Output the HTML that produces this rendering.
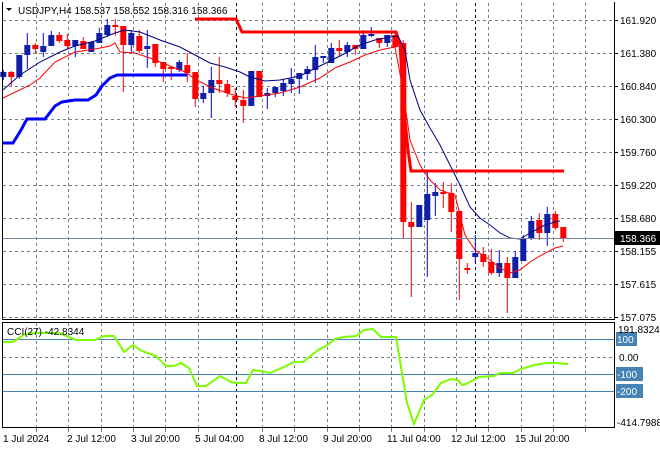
<!DOCTYPE html>
<html><head><meta charset="utf-8"><style>
html,body{margin:0;padding:0;background:#fff;width:660px;height:450px;overflow:hidden}
svg{display:block}
text{font-family:"Liberation Sans","DejaVu Sans",sans-serif;font-size:10px;fill:#000}
</style></head><body>
<svg id="s" width="660" height="450" xmlns="http://www.w3.org/2000/svg">
<rect width="660" height="450" fill="#fff"/>
<g id="grid"></g>
<g id="c"></g>
<polyline fill="none" stroke="#0000ff" stroke-width="3" points="3,143 13,143 21,130 27,119 45,119 55,106 62,102 75,100 88,100 96,95 102,86 110,78 117,75 187,75"/>
<polyline fill="none" stroke="#ff0000" stroke-width="3" points="195,19 236,19 242,32 396,32 400,44 404,110 408,150 411,171 564,171"/>
<polyline fill="none" stroke="#000080" stroke-width="1" points="3,90 20,75 40,62 60,52 75,46 95,41 115,33 125,30 140,32 160,40 180,47 195,55 210,63 225,67 240,72 250,77 265,81 280,80 300,76 320,66 340,56 360,45 375,40 390,37 398,36 405,50 410,80 420,110 430,128 440,145 450,165 460,185 470,207 480,218 490,225 500,233 510,238 520,239 530,233 545,225 555,222 560,221"/>
<polyline fill="none" stroke="#ff0000" stroke-width="1" points="3,98 30,85 40,78 55,62 75,52 95,49 110,46 115,43 120,52 135,53 150,58 170,66 185,72 195,79 210,87 230,94 245,98 260,96 280,93 300,87 320,78 335,68 350,62 365,55 380,50 395,47 403,90 410,140 420,165 430,180 440,190 455,195 465,235 475,250 490,260 500,268 510,273 520,270 530,262 540,256 555,248 563,246"/>
<line x1="3" y1="238.5" x2="614" y2="238.5" stroke="#778899" stroke-width="1"/>
<polyline fill="none" stroke="#7cfc00" stroke-width="2" points="3,342 13,342 25,334 34,333 59,333 76,340 95,340 104,336 114,336 124,352 133,345 142,351 156,356 166,366 174,366 181,363 189,368 197,386 206,386 220,376 231,382 237,383 246,383 253,370 261,371 270,373 284,367 294,362 303,362 318,350 326,346 335,339 343,337 356,336 364,330 373,329 381,337 396,337 407,403 414,424 424,400 432,395 441,383 451,379 458,380 462,385 466,384 479,377 494,376 500,373 513,373 521,369 534,365 547,363 555,363 568,364"/>
<line x1="2.5" y1="2" x2="2.5" y2="320" stroke="#000"/>
<line x1="614.5" y1="2" x2="614.5" y2="320" stroke="#000"/>
<line x1="2" y1="319.5" x2="615" y2="319.5" stroke="#000"/>
<rect x="2.5" y="322.5" width="612" height="105" fill="none" stroke="#000"/>
<path d="M6 8 L12 8 L9 11 Z" fill="#000"/>
<text x="18" y="14">USDJPY,H4  158.537 158.552 158.316 158.366</text>
<text x="7" y="335">CCI(27) -42.8344</text>
<g id="lab"></g>
<rect x="615" y="231" width="45" height="14" fill="#000"/>
<text x="620" y="242" style="fill:#fff">158.366</text>
</svg>
<script>
var NS="http://www.w3.org/2000/svg";
function el(p,t,a,txt){var e=document.createElementNS(NS,t);for(var k in a)e.setAttribute(k,a[k]);if(txt)e.textContent=txt;document.getElementById(p).appendChild(e);return e;}
var hy=[20,53,86,119,152,185,218,251,284,317],hl=["161.920","161.380","160.840","160.300","159.760","159.220","158.680","158.155","157.615","157.075"];
hy.forEach(function(y,i){el("grid","line",{x1:3,y1:y+.5,x2:614,y2:y+.5,stroke:"#708090","stroke-dasharray":"3,3"});
 el("grid","line",{x1:614,y1:y+.5,x2:618,y2:y+.5,stroke:"#000"});
 el("lab","text",{x:620,y:y+4},hl[i]);});
for(var k=0;k<19;k++){var x=Math.round(36+32.3*k)+.5;if(x>612)break;if(Math.abs(x-236)<6||Math.abs(x-476)<6)continue;
 el("grid","line",{x1:x,y1:3,x2:x,y2:319,stroke:"#708090","stroke-dasharray":"3,3"});
 el("grid","line",{x1:x,y1:323,x2:x,y2:427,stroke:"#708090","stroke-dasharray":"3,3"});
 el("grid","line",{x1:x,y1:428,x2:x,y2:432,stroke:"#708090"});}
[236.5,475.5].forEach(function(x){el("grid","line",{x1:x,y1:3,x2:x,y2:319,stroke:"#000","stroke-dasharray":"3,3"});
 el("grid","line",{x1:x,y1:323,x2:x,y2:427,stroke:"#000","stroke-dasharray":"3,3"});});
[339,374,391].forEach(function(y){el("grid","line",{x1:3,y1:y+.5,x2:614,y2:y+.5,stroke:"#4682b4"});});
el("grid","line",{x1:3,y1:357.5,x2:614,y2:357.5,stroke:"#708090","stroke-dasharray":"3,3"});
[[339,"100"],[374,"-100"],[391,"-200"]].forEach(function(a){el("lab","rect",{x:616,y:a[0]-7,width:a[1].length*6+3,height:14,fill:"#4682b4"});el("lab","text",{x:617,y:a[0]+4,style:"fill:#fff"},a[1]);});
el("lab","text",{x:618,y:333},"191.8324");el("lab","text",{x:619,y:361},"0.00");el("lab","text",{x:617,y:426},"-414.7988");
[[3,"1 Jul 2024"],[67,"2 Jul 12:00"],[131,"3 Jul 20:00"],[195,"5 Jul 04:00"],[259,"8 Jul 12:00"],[323,"9 Jul 20:00"],[387,"11 Jul 04:00"],[451,"12 Jul 12:00"],[515,"15 Jul 20:00"]].forEach(function(a){
 el("lab","text",{x:a[0],y:442},a[1]);});
var C=[["b",72,77,70,80],["r",72,77,71,86],["b",55,77,55,79],["b",45,55,33,69],["r",45,49,43,53],["b",46,52,33,57],["b",35,46,31,46],["r",35,41,32,43],["r",40,46,34,49],["b",40,46,40,57],["r",41,49,37,49],["b",42,52,42,52],["b",33,43,28,43],["b",25,35,19,37],["r",25,27,19,36],["r",26,45,26,92],["b",33,45,30,53],["r",36,51,30,53],["b",46,49,30,68],["r",44,63,44,67],["r",62,69,62,82],["r",67,69,67,80],["b",62,70,60,72],["r",65,73,53,82],["r",72,99,72,107],["b",93,99,86,103],["b",80,93,67,118],["r",80,84,57,93],["r",84,93,80,97],["r",96,100,88,107],["r",100,106,90,123],["b",71,106,71,106],["r",71,97,71,97],["b",93,96,88,109],["b",87,93,87,97],["b",83,91,79,96],["b",79,84,68,93],["b",73,79,73,94],["b",69,74,66,80],["b",57,70,45,83],["b",56,57,56,63],["b",48,63,43,63],["r",48,51,40,57],["b",45,52,42,57],["r",45,49,45,55],["b",35,49,30,49],["b",34,35,27,37],["r",38,43,38,48],["b",35,43,35,47],["r",35,47,33,47],["r",43,222,40,238],["r",222,227,202,297],["b",205,227,205,227],["b",194,220,172,277],["b",192,196,183,216],["r",192,194,182,208],["r",193,212,183,232],["r",211,259,211,300],["r",268,269,263,274],["b",253,257,235,263],["r",254,262,247,267],["r",262,273,249,275],["b",263,273,250,277],["r",263,278,257,313],["b",257,278,251,278],["b",238,261,235,261],["b",221,239,216,240],["r",220,233,213,240],["b",214,233,207,246],["r",214,228,211,230],["r",227,239,227,242]];
C.forEach(function(c,i){var x=3.3+8*i;
 el("c","line",{x1:x,y1:c[3],x2:x,y2:c[4],stroke:c[0]=="b"?"#0000ff":"#ff0000","stroke-width":1});
 var h=Math.max(c[2]-c[1],2);el("c","rect",{x:x-3,y:c[1],width:6,height:h,fill:c[0]=="b"?"#0f1fa8":"#ff0000"});});
</script>
</body></html>
